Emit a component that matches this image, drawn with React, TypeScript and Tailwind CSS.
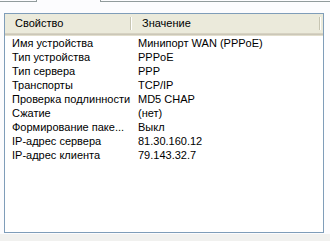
const rows: [string, string][] = [
    ['Имя устройства', 'Минипорт WAN (PPPoE)'],
    ['Тип устройства', 'PPPoE'],
    ['Тип сервера', 'PPP'],
    ['Транспорты', 'TCP/IP'],
    ['Проверка подлинности', 'MD5 CHAP'],
    ['Сжатие', '(нет)'],
    ['Формирование паке...', 'Выкл'],
    ['IP-адрес сервера', '81.30.160.12'],
    ['IP-адрес клиента', '79.143.32.7'],
];

export default function App() {
    return (
        <div
            className="w-[330px] h-[241px] bg-[#fcfcfe] flex flex-col text-[11px] text-black"
            style={{ fontFamily: '"Liberation Sans", Arial, sans-serif' }}
        >
            {/* Tab strip (bottom edge only visible) */}
            <div className="flex h-[2px] shrink-0">
                <div className="w-[36px] border-b border-[#919b9c]" />
                <div className="w-[65px] border-x border-[#919b9c]" />
                <div className="flex-1 border-b border-[#919b9c]" />
            </div>

            {/* List view */}
            <div className="mt-[11px] ml-[4px] w-[320px] h-[220px] border border-[#7f9db9] bg-white flex flex-col">
                {/* Header */}
                <div className="flex h-[19px] bg-[#ebeadb] shrink-0">
                    <div className="w-[127px] flex items-center pl-[10px] relative">
                        Свойство
                        <div className="absolute right-0 top-[3px] bottom-[3px] w-[2px] border-l border-[#c7c5b2] bg-white" />
                    </div>
                    <div className="w-[189px] flex items-center pl-[10px] relative">
                        Значение
                        <div className="absolute right-0 top-[3px] bottom-[3px] w-[2px] border-l border-[#c7c5b2] bg-white" />
                    </div>
                </div>
                <div className="h-[1px] bg-[#d6d2c2] shrink-0" />
                <div className="h-[1px] bg-[#cbc7b8] shrink-0" />
                <div className="h-[1px] bg-[#e2decd] shrink-0" />

                {/* Rows */}
                <div className="flex flex-col">
                    {rows.map(([name, value]) => (
                        <div key={name} className="flex h-[14px] items-center leading-[14px]">
                            <div className="w-[127px] pl-[7px] whitespace-nowrap overflow-hidden">{name}</div>
                            <div className="pl-[6px] whitespace-nowrap">{value}</div>
                        </div>
                    ))}
                </div>
            </div>

            <div className="flex-1 bg-[#f1f1ef] mt-[1px]" />
        </div>
    );
}
